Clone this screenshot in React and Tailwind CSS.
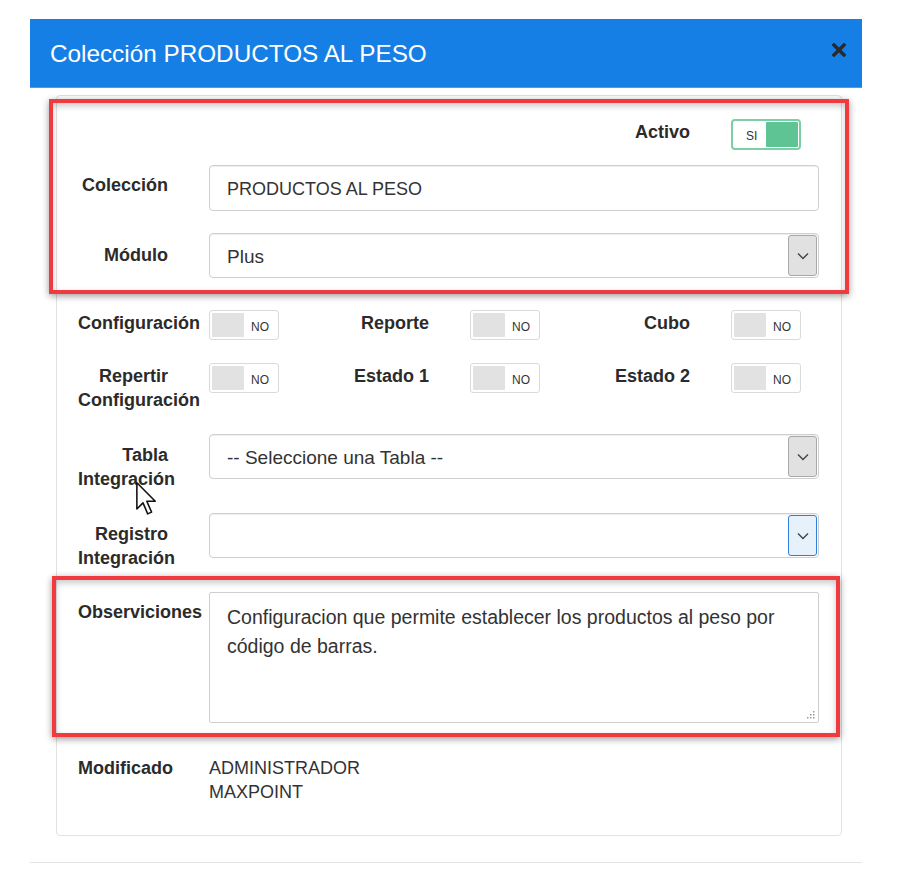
import React from 'react';

// Small "NO" switch
const SwitchOff = () => (
  <div className="w-[70px] h-[30px] shrink-0 border border-[#dadada] rounded-[3px] bg-white p-[2px] flex">
    <div className="w-[32px] bg-[#e2e2e2] rounded-[1px]" />
    <div className="flex-1 flex items-center justify-center pt-[4px] text-[12px] text-[#333]">NO</div>
  </div>
);

const SwitchOn = () => (
  <div className="w-[70px] h-[31px] shrink-0 border-2 border-[#7ccfa4] rounded-[4px] bg-white p-[1px] flex">
    <div className="flex-1 flex items-center pl-[12px] pt-[2px] text-[12px] text-[#333]">SI</div>
    <div className="w-[32px] bg-[#5fc493] rounded-[1px]" />
  </div>
);

const Label = ({ children, className = '' }) => (
  <div className={`w-[90px] shrink-0 text-right font-bold text-[18px] leading-[24px] text-[#2b2b2b] ${className}`}>
    {children}
  </div>
);

const Col = ({ label, children }) => (
  <div className="w-[261px] shrink-0 flex items-start">
    <Label className="pt-[1px]">{label}</Label>
    <div className="ml-[41px]">{children}</div>
  </div>
);

const Chevron = () => (
  <svg width="12" height="8" viewBox="0 0 12 8">
    <path d="M1 1.5 L6 6.5 L11 1.5" fill="none" stroke="#444" strokeWidth="1.4" />
  </svg>
);

const Select = ({ value, focus }) => (
  <div className="w-[610px] h-[45px] border border-[#cfcfcf] rounded-[4px] bg-white flex items-center shadow-[inset_0_1px_1px_rgba(0,0,0,0.07)]">
    <span className="flex-1 pl-[17px] pt-[3px] text-[19px] text-[#333]">{value}</span>
    <div
      className={`w-[29px] h-[41px] mr-[1px] rounded-[3px] border flex items-center justify-center ${
        focus ? 'bg-[#e6f1fb] border-[#2f80d8]' : 'bg-[#e1e1e1] border-[#a9a9a9]'
      }`}
    >
      <Chevron />
    </div>
  </div>
);

const FieldRow = ({ label, labelPad = 'pt-[9px]', children, className = '' }) => (
  <div className={`flex items-start ${className}`}>
    <Label className={labelPad}>{label}</Label>
    <div className="ml-[41px]">{children}</div>
  </div>
);

const Cursor = () => (
  <svg className="absolute left-[135px] top-[481px]" width="23" height="35" viewBox="0 0 13 20">
    <path
      d="M1 1 L1 16 L4.5 12.5 L7.2 18.8 L9.4 17.8 L6.7 11.6 L11.5 11.6 Z"
      fill="#fff"
      stroke="#111"
      strokeWidth="0.9"
      strokeLinejoin="round"
    />
  </svg>
);

const redBox =
  'border-[4px] border-[#ef3a40] shadow-[0_2px_7px_rgba(0,0,0,0.4),inset_0_3px_6px_rgba(0,0,0,0.22)]';

export default function App() {
  return (
    <div className="relative w-[901px] h-[870px] bg-white font-['Liberation_Sans',Arial,sans-serif] text-[#333]">
      <div className="ml-[30px] pt-[19px] w-[832px]">
        {/* header */}
        <div className="h-[69px] bg-[#167fe6] border-b border-[#4d9bea] flex items-center justify-between pl-[20px] pr-[16px]">
          <h1 className="text-[24.3px] text-white pt-[3px]">Colección PRODUCTOS AL PESO</h1>
          <svg width="14" height="14" viewBox="0 0 14 14" className="-mt-[6px]">
            <path d="M2 2 L12 12 M12 2 L2 12" stroke="#2a2a2a" strokeWidth="3.4" strokeLinecap="square" />
          </svg>
        </div>

        {/* card */}
        <div className="mt-[7px] ml-[26px] w-[786px] border border-[#e2e2e2] rounded-[4px] pb-[31px]">
          {/* first highlighted block */}
          <div className={`mt-[3px] -ml-[8px] -mr-[8px] pl-[25px] pr-[25px] pt-[16px] pb-[12px] ${redBox}`}>
            <div className="flex">
              <div className="w-[261px] shrink-0" />
              <div className="w-[261px] shrink-0" />
              <Col label="Activo">
                <SwitchOn />
              </Col>
            </div>
            <FieldRow label="Colección" className="mt-[15px]" labelPad="pt-[8px]">
              <div className="w-[610px] h-[46px] border border-[#cfcfcf] rounded-[4px] bg-white flex items-center pl-[17px] pt-[3px] text-[18px] text-[#333] shadow-[inset_0_1px_1px_rgba(0,0,0,0.07)]">
                PRODUCTOS AL PESO
              </div>
            </FieldRow>
            <FieldRow label="Módulo" className="mt-[22px]" labelPad="pt-[10px]">
              <Select value="Plus" />
            </FieldRow>
          </div>

          {/* switches */}
          <div className="pl-[21px] pt-[16px]">
            <div className="flex">
              <Col label="Configuración">
                <SwitchOff />
              </Col>
              <Col label="Reporte">
                <SwitchOff />
              </Col>
              <Col label="Cubo">
                <SwitchOff />
              </Col>
            </div>
            <div className="flex mt-[23px]">
              <Col label="Repertir Configuración">
                <SwitchOff />
              </Col>
              <Col label="Estado 1">
                <SwitchOff />
              </Col>
              <Col label="Estado 2">
                <SwitchOff />
              </Col>
            </div>
            <FieldRow label="Tabla Integración" className="mt-[22px]" labelPad="pt-[9px]">
              <Select value="-- Seleccione una Tabla --" />
            </FieldRow>
            <FieldRow label="Registro Integración" className="mt-[22px]" labelPad="pt-[9px]">
              <Select value="" focus />
            </FieldRow>
          </div>

          {/* second highlighted block */}
          <div className={`mt-[6px] -ml-[5px] mr-[1px] pl-[22px] pr-[14px] pt-[12px] pb-[10px] ${redBox}`}>
            <FieldRow label="Observiciones" labelPad="pt-[8px]">
              <div className="relative w-[610px] h-[131px] border border-[#cfcfcf] rounded-[2px] bg-white pl-[17px] pr-[16px] pt-[10px] text-[19.5px] leading-[29px] text-[#333]">
                Configuracion que permite establecer los productos al peso por código de barras.
                <svg className="absolute right-[3px] bottom-[3px]" width="9" height="9" viewBox="0 0 9 9">
                  <g fill="#9a9a9a">
                    <rect x="7" y="1" width="1.5" height="1.5" />
                    <rect x="4" y="4" width="1.5" height="1.5" />
                    <rect x="7" y="4" width="1.5" height="1.5" />
                    <rect x="1" y="7" width="1.5" height="1.5" />
                    <rect x="4" y="7" width="1.5" height="1.5" />
                    <rect x="7" y="7" width="1.5" height="1.5" />
                  </g>
                </svg>
              </div>
            </FieldRow>
          </div>

          {/* modified by */}
          <div className="pl-[21px] mt-[19px] flex items-start">
            <Label className="!text-left">Modificado</Label>
            <div className="ml-[41px] text-[18px] leading-[24px] text-[#333]">
              ADMINISTRADOR
              <br />
              MAXPOINT
            </div>
          </div>
        </div>

        {/* footer line */}
        <div className="mt-[26px] border-t border-[#e5e5e5]" />
      </div>
      <Cursor />
    </div>
  );
}
